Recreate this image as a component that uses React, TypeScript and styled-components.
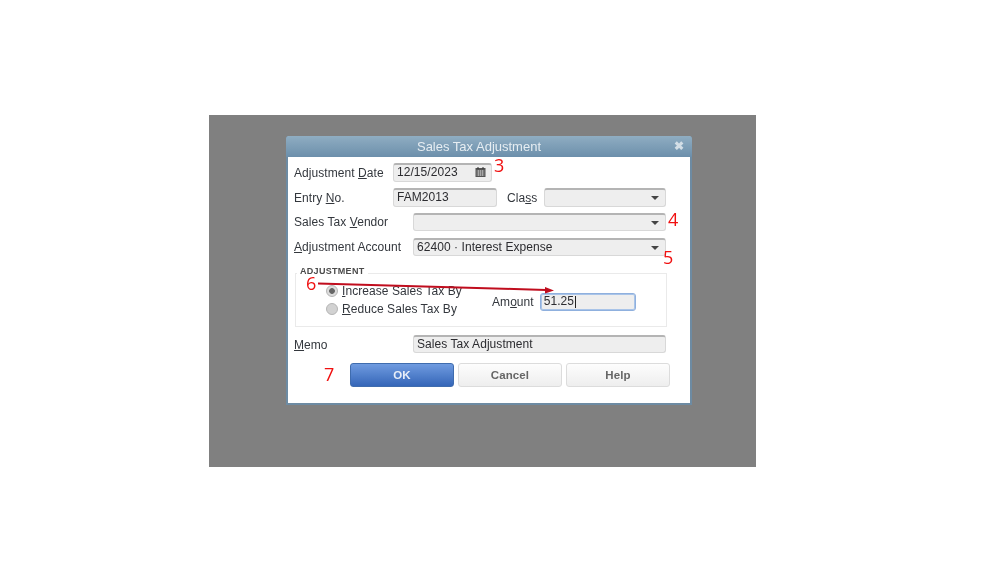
import React from "react";
import styled, { createGlobalStyle } from "styled-components";

const Global = createGlobalStyle`
  html, body { margin: 0; padding: 0; background: #fff; }
  body { font-family: "Liberation Sans", Arial, sans-serif; }
`;
const Page = styled.div`
  width: 999px; height: 562px; box-sizing: border-box; padding: 115px 0 0 209px; background: #fff; overflow: hidden;
`;
const Backdrop = styled.div`
  position: relative; width: 547px; height: 352px; box-sizing: border-box; padding: 21px 0 0 77px; background: #808080;
  filter: blur(.35px);
`;
const Dialog = styled.div`
  width: 406px; height: 269px; box-sizing: border-box; background: #fff; border: 2px solid #6d8ba3; border-top: 0; border-radius: 3px 3px 0 0;
  display: flex; flex-direction: column;
`;
const TitleBar = styled.div`
  height: 21px; margin: 0 -2px; padding-right: 20px; position: relative; flex: none; display: flex; align-items: center; justify-content: center;
  background: linear-gradient(#8fadc2, #6c8fab); border-radius: 3px 3px 0 0; color: #e6edf2; font-size: 13px;
`;
const Close = styled.span`
  position: absolute; right: 8px; top: 4px; color: #d3dee6; font-size: 12px; font-weight: 700; line-height: 13px;
`;
const Body = styled.div`
  padding: 6px 24px 0 6px; display: flex; flex-direction: column;
`;
const Row = styled.div<{ $h: number; $mb: number }>`
  height: ${p => p.$h}px; margin-bottom: ${p => p.$mb}px; display: flex; align-items: center; flex: none;
`;
const Label = styled.span<{ $w?: number }>`
  ${p => (p.$w ? `width: ${p.$w}px; flex: none;` : "")}
  font-size: 12px; color: #33373d; white-space: nowrap; letter-spacing: .06px;
  u { text-underline-offset: 1px; }
`;
const ClassLabel = styled(Label)`
  margin-left: 10px; width: 37px; flex: none;
`;
const MemoLabel = styled(Label)`
  padding-top: 2px;
`;
const Field = styled.div<{ $w: number; $ml?: number; $focus?: boolean }>`
  width: ${p => p.$w}px; height: 100%; margin-left: ${p => p.$ml ?? 0}px; flex: none; box-sizing: border-box;
  display: flex; align-items: center; justify-content: space-between; padding: 0 5px 2px 3px;
  background: #eeeeee; border-radius: 3px; font-size: 12px; color: #2c2c30; letter-spacing: .06px;
  border: 1px solid ${p => (p.$focus ? "#8fb0de" : "#d8d8d8")};
  border-top: ${p => (p.$focus ? "1px solid #8fb0de" : "2px solid #b4b4b4")};
  ${p => (p.$focus ? "box-shadow: 0 0 0 1px #a9c4e8 inset;" : "")}
`;
const Caret = styled.span`
  width: 1px; height: 12px; margin-left: 1px; background: #222; display: inline-block; vertical-align: middle;
`;
const Arrow = styled.span`
  width: 0; height: 0; border-left: 4px solid transparent; border-right: 4px solid transparent; border-top: 4px solid #444; margin: 2px 1px 0 0; flex: none;
`;
const Group = styled.div`
  position: relative; width: 372px; height: 54px; margin: 0 0 8px 1px; box-sizing: border-box; border: 1px solid #eaeaea;
  display: flex; flex: none;
`;
const Legend = styled.span`
  position: absolute; left: 1px; top: -8px; padding: 0 3px; background: #fff; font-size: 9px; font-weight: 700; color: #4a4a4a; letter-spacing: .3px; line-height: 11px;
`;
const Radios = styled.div`
  width: 196px; flex: none; padding: 10px 0 0 30px; box-sizing: border-box; display: flex; flex-direction: column; gap: 5px;
`;
const RadioRow = styled.div`
  height: 13px; display: flex; align-items: center; gap: 4px;
`;
const RadioDot = styled.span<{ $on?: boolean }>`
  width: 12px; height: 12px; box-sizing: border-box; border-radius: 50%; flex: none; border: 1px solid #b5b5b5;
  background: ${p => (p.$on ? "radial-gradient(circle, #666 0 2.5px, #dcdcdc 3.2px)" : "#d2d2d2")};
`;
const AmountArea = styled.div`
  display: flex; align-items: center; gap: 6px; height: 18px; margin-top: 19px;
`;
const Buttons = styled.div`
  display: flex; gap: 4px; padding-left: 56px; margin-right: -20px;
`;
const Btn = styled.div<{ $primary?: boolean }>`
  width: 104px; height: 24px; box-sizing: border-box; border-radius: 3px; display: flex; align-items: center; justify-content: center;
  font-size: 11.5px; font-weight: 700; letter-spacing: .1px;
  color: ${p => (p.$primary ? "#e8eef8" : "#666")};
  background: ${p => (p.$primary ? "linear-gradient(#6f9be0, #3566b8)" : "linear-gradient(#fdfdfd, #eeeeee)")};
  border: 1px solid ${p => (p.$primary ? "#3f6cae" : "#dcdcdc")};
`;
const Note = styled.span<{ $x: number; $y: number }>`
  position: absolute; left: ${p => p.$x}px; top: ${p => p.$y}px; color: #f01010; font-size: 18px; line-height: 18px; font-family: "Open Sans", sans-serif;
`;
const Overlay = styled.svg`
  position: absolute; left: 0; top: 0; pointer-events: none;
`;

export default function App() {
  return (
    <Page>
      <Global />
      <Backdrop>
        <Dialog>
          <TitleBar>
            Sales Tax Adjustment
            <Close>✖</Close>
          </TitleBar>
          <Body>
            <Row $h={19} $mb={6}>
              <Label $w={99}>Adjustment <u>D</u>ate</Label>
              <Field $w={99}>
                12/15/2023
                <svg width="11" height="10" viewBox="0 0 11 10"><rect x="0.5" y="1" width="10" height="9" fill="#555" /><path d="M1.5 4h8M1.5 6h8M1.5 8h8M3.5 3v6M5.5 3v6M7.5 3v6" stroke="#bbb" strokeWidth=".7" /><path d="M3 0v2M8 0v2" stroke="#333" /></svg>
              </Field>
            </Row>
            <Row $h={19} $mb={6}>
              <Label $w={99}>Entry <u>N</u>o.</Label>
              <Field $w={104}>FAM2013</Field>
              <ClassLabel>Cla<u>s</u>s</ClassLabel>
              <Field $w={122}><span /><Arrow /></Field>
            </Row>
            <Row $h={18} $mb={7}>
              <Label $w={119}>Sales Tax <u>V</u>endor</Label>
              <Field $w={253}><span /><Arrow /></Field>
            </Row>
            <Row $h={18} $mb={17}>
              <Label $w={119}><u>A</u>djustment Account</Label>
              <Field $w={253}>62400 · Interest Expense<Arrow /></Field>
            </Row>
            <Group>
              <Legend>ADJUSTMENT</Legend>
              <Radios>
                <RadioRow><RadioDot $on /><Label><u>I</u>ncrease Sales Tax By</Label></RadioRow>
                <RadioRow><RadioDot /><Label><u>R</u>educe Sales Tax By</Label></RadioRow>
              </Radios>
              <AmountArea>
                <Label>Am<u>o</u>unt</Label>
                <Field $w={96} $focus><span>51.25<Caret /></span></Field>
              </AmountArea>
            </Group>
            <Row $h={18} $mb={10}>
              <MemoLabel $w={119}><u>M</u>emo</MemoLabel>
              <Field $w={253}>Sales Tax Adjustment</Field>
            </Row>
            <Buttons>
              <Btn $primary>OK</Btn>
              <Btn>Cancel</Btn>
              <Btn>Help</Btn>
            </Buttons>
          </Body>
        </Dialog>
        <Note $x={285} $y={41}>3</Note>
        <Note $x={459} $y={95}>4</Note>
        <Note $x={454} $y={133}>5</Note>
        <Note $x={97} $y={159}>6</Note>
        <Note $x={115} $y={250}>7</Note>
        <Overlay width="546" height="352" viewBox="0 0 546 352">
          <path d="M109 168.5 L337 175" stroke="#c00d1e" strokeWidth="2" fill="none" />
          <path d="M336 172 L345 175.5 L336 178.5 Z" fill="#c00d1e" />
        </Overlay>
      </Backdrop>
    </Page>
  );
}
